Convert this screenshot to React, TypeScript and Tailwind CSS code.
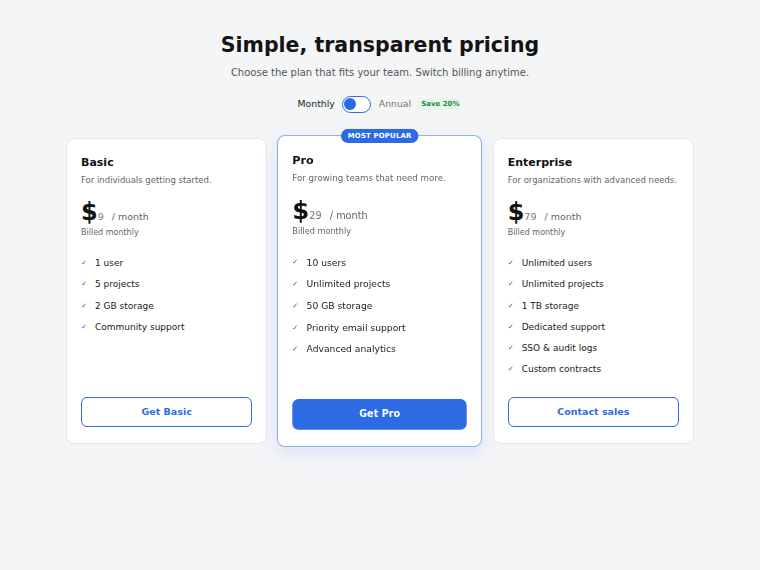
import React, { useState } from "react";

type Plan = {
  name: string;
  desc: string;
  price: string;
  features: string[];
  cta: string;
  popular?: boolean;
};

const plans: Plan[] = [
  {
    name: "Basic",
    desc: "For individuals getting started.",
    price: "9",
    features: ["1 user", "5 projects", "2 GB storage", "Community support"],
    cta: "Get Basic",
  },
  {
    name: "Pro",
    desc: "For growing teams that need more.",
    price: "29",
    features: [
      "10 users",
      "Unlimited projects",
      "50 GB storage",
      "Priority email support",
      "Advanced analytics",
    ],
    cta: "Get Pro",
    popular: true,
  },
  {
    name: "Enterprise",
    desc: "For organizations with advanced needs.",
    price: "79",
    features: [
      "Unlimited users",
      "Unlimited projects",
      "1 TB storage",
      "Dedicated support",
      "SSO & audit logs",
      "Custom contracts",
    ],
    cta: "Contact sales",
  },
];

function PlanCard({ plan }: { plan: Plan }) {
  return (
    <div
      className={
        plan.popular
          ? "relative flex flex-col rounded-lg border border-[#8fb0ee] bg-white px-[14px] pt-[17px] pb-4 shadow-[0_6px_16px_rgba(45,107,228,0.12)] scale-[1.02]"
          : "relative flex flex-col rounded-lg border border-[#e3e6eb] bg-white px-[14px] pt-[17px] pb-4"
      }
    >
      {plan.popular && (
        <div className="absolute left-1/2 top-0 -translate-x-1/2 -translate-y-1/2 rounded-full bg-[#2d6be4] px-[7px] py-[3.5px] text-[6.8px] font-bold leading-[7px] tracking-wide text-white">
          MOST POPULAR
        </div>
      )}
      <h2 className="text-[11px] font-bold leading-[14px] text-[#111]">{plan.name}</h2>
      <p className="mt-[4px] text-[8.5px] leading-[12px] text-[#666]">{plan.desc}</p>
      <div className="mt-[12px] flex h-[28px] items-baseline">
        <span className="text-[24px] font-bold leading-[28px] text-[#111]">$</span>
        <span className="text-[9.5px] text-[#777]">{plan.price}</span>
        <span className="ml-[8px] text-[9.5px] text-[#666]">/ month</span>
      </div>
      <p className="mt-[1px] text-[8px] leading-[11px] text-[#666]">Billed monthly</p>
      <ul className="mt-[15px] flex flex-col">
        {plan.features.map((f) => (
          <li key={f} className="flex items-center text-[9px] leading-[21.3px] text-[#222]">
            <span className="w-[14px] text-[7px] text-[#3560c8]">✓</span>
            {f}
          </li>
        ))}
      </ul>
      <div className="flex-1" />
      <button
        className={
          plan.popular
            ? "mt-4 h-[30px] w-full rounded-md bg-[#2d6be4] text-[9.5px] font-bold text-white"
            : "mt-4 h-[30px] w-full rounded-md border-[1.5px] border-[#2d6be4] bg-white text-[9.5px] font-bold text-[#2d6be4]"
        }
      >
        {plan.cta}
      </button>
    </div>
  );
}

export default function App() {
  const [annual, setAnnual] = useState(false);

  return (
    <div
      className="min-h-screen bg-[#f4f5f7] pt-[32px]"
      style={{ fontFamily: '"DejaVu Sans", sans-serif' }}
    >
      <div className="text-center">
        <h1 className="text-[20.5px] font-bold leading-[26px] text-[#141414]">
          Simple, transparent pricing
        </h1>
        <p className="mt-[7.5px] text-[10px] leading-[13px] text-[#555]">
          Choose the plan that fits your team. Switch billing anytime.
        </p>
        <div className="mt-[17px] flex h-[17px] items-center justify-center text-[9.3px]">
          <span className="text-[#222]">Monthly</span>
          <button
            onClick={() => setAnnual((a) => !a)}
            className="ml-[7px] flex h-[17px] w-[29px] items-center rounded-full border-[1.5px] border-[#2d6be4] bg-white px-[1px]"
            aria-label="toggle billing"
          >
            <span
              className={
                annual
                  ? "ml-auto h-[12px] w-[12px] rounded-full bg-[#2d6be4]"
                  : "h-[12px] w-[12px] rounded-full bg-[#2d6be4]"
              }
            />
          </button>
          <span className="ml-[8px] text-[#777]">Annual</span>
          <span className="ml-[7px] rounded bg-[#e8f6ec] px-[3px] py-[1px] text-[7px] font-bold text-[#1d8a3e]">
            Save 20%
          </span>
        </div>
      </div>

      <div className="mx-auto mt-[25.5px] grid w-[628px] grid-cols-3 gap-3">
        {plans.map((p) => (
          <PlanCard key={p.name} plan={p} />
        ))}
      </div>
    </div>
  );
}
